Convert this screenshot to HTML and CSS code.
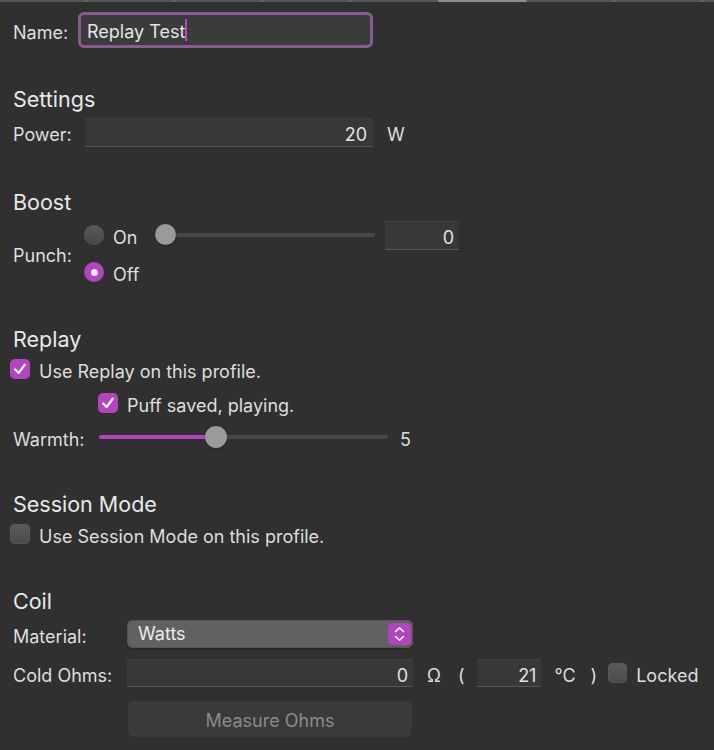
FILE: index.html
```html
<!DOCTYPE html>
<html>
<head>
<meta charset="utf-8">
<link rel="stylesheet" href="styles.css">
</head>
<body>
<div class="tabstrip">
  <span class="seg first"></span><span class="seg"></span><span class="seg"></span><span class="seg"></span><span class="seg"></span><span class="seg active"></span><span class="seg"></span><span class="seg"></span><span class="seg last"></span>
</div>
<div class="panel">
  <div class="row name-row">
    <span class="label w-name">Name:</span>
    <div class="focus-field"><span class="field-text">Replay Test</span><span class="caret"></span></div>
  </div>

  <h2 class="heading h-settings">Settings</h2>
  <div class="row power-row">
    <span class="label w-power">Power:</span>
    <div class="numfield power-field">20</div>
    <span class="unit">W</span>
  </div>

  <h2 class="heading">Boost</h2>
  <div class="punch">
    <span class="label w-punch">Punch:</span>
    <div class="punch-rows">
      <div class="row radio-row">
        <span class="radio-item"><span class="radio"></span><span class="rtext">On</span></span>
        <div class="slider punch-slider"><div class="track"></div><div class="thumb thumb-start"></div></div>
        <div class="numfield punch-field">0</div>
      </div>
      <div class="row radio-row off-row">
        <span class="radio-item"><span class="radio on"><span class="dot"></span></span><span class="rtext">Off</span></span>
      </div>
    </div>
  </div>

  <h2 class="heading">Replay</h2>
  <div class="row check-row first-check">
    <span class="check on"><svg viewBox="0 0 20 20" width="20" height="20"><path d="M5.2 10.4 L8.6 14 L14.8 5.6" fill="none" stroke="#fff" stroke-width="2.2" stroke-linecap="round" stroke-linejoin="round"/></svg></span>
    <span class="ctext">Use Replay on this profile.</span>
  </div>
  <div class="row check-row indent-check">
    <span class="check on"><svg viewBox="0 0 20 20" width="20" height="20"><path d="M5.2 10.4 L8.6 14 L14.8 5.6" fill="none" stroke="#fff" stroke-width="2.2" stroke-linecap="round" stroke-linejoin="round"/></svg></span>
    <span class="ctext">Puff saved, playing.</span>
  </div>
  <div class="row warmth-row">
    <span class="label w-warmth">Warmth:</span>
    <div class="slider warmth-slider"><div class="track"><div class="fill"></div></div><div class="thumb thumb-warmth"></div></div>
    <span class="value">5</span>
  </div>

  <h2 class="heading">Session Mode</h2>
  <div class="row check-row first-check">
    <span class="check"></span>
    <span class="ctext">Use Session Mode on this profile.</span>
  </div>

  <h2 class="heading">Coil</h2>
  <div class="row material-row">
    <span class="label w-coil">Material:</span>
    <div class="popup">
      <span class="popup-text">Watts</span>
      <span class="stepper"><svg viewBox="0 0 23 22" width="23" height="22"><path d="M7.5 8.5 L11.5 4.8 L15.5 8.5 M7.5 13.5 L11.5 17.2 L15.5 13.5" fill="none" stroke="#fff" stroke-width="1.6" stroke-linecap="round" stroke-linejoin="round"/></svg></span>
    </div>
  </div>
  <div class="row ohms-row">
    <span class="label w-coil">Cold Ohms:</span>
    <div class="numfield ohms-field">0</div>
    <span class="sym omega">Ω</span>
    <span class="sym paren-open">(</span>
    <div class="numfield temp-field">21</div>
    <span class="sym degc">°C</span>
    <span class="sym paren-close">)</span>
    <span class="check small"></span>
    <span class="ctext locked">Locked</span>
  </div>
  <div class="row button-row">
    <div class="button">Measure Ohms</div>
  </div>
</div>
</body>
</html>
```

FILE: styles.css
```css
html, body {
  margin: 0;
  padding: 0;
  background: #303030;
}
body {
  width: 714px;
  height: 750px;
  overflow: hidden;
  font-family: Inter, "Liberation Sans", Arial, sans-serif;
  font-size: 18px;
  color: #dedede;
}

.tabstrip {
  display: flex;
  height: 2px;
  background: #555;
}
.seg {
  width: 88px;
  height: 2px;
  border-right: 1px solid #7a7a7a;
  box-sizing: border-box;
}
.seg.first { width: 87px; }
.seg.active { background: #8c8c8c; }
.seg.last { border-right: none; flex: 1; }

.panel {
  padding-left: 13px;
}

.row {
  display: flex;
  align-items: center;
}
.label, .ctext, .rtext, .unit, .sym, .value {
  flex: none;
  line-height: 22px;
  padding-top: 5px;
}
.w-name { width: 65px; }
.w-power { width: 72px; }
.w-punch { width: 71px; }
.w-warmth { width: 86px; }
.w-coil { width: 114px; }

.heading {
  margin: 0;
  font-size: 21.5px;
  font-weight: 400;
  line-height: 26px;
  height: 26px;
  padding-top: 1px;
  box-sizing: border-box;
  color: #e8e8e8;
  margin-top: 41px;
}
.h-settings { margin-top: 37px; }

/* Name */
.name-row {
  margin-top: 10px;
  height: 36px;
}
.focus-field {
  width: 295px;
  height: 36px;
  box-sizing: border-box;
  border: 3px solid #8a5a92;
  border-radius: 6px;
  background: #3b3b3b;
  display: flex;
  align-items: center;
  padding-left: 6px;
  padding-top: 2px;
}
.field-text { color: #e4e4e4; }
.caret {
  display: inline-block;
  width: 2px;
  height: 22px;
  background: #b04cbd;
  margin-top: -2px;
}

/* numeric fields */
.numfield {
  box-sizing: border-box;
  background: #383838;
  border-top: 1px solid #3e3e3e;
  border-bottom: 1px solid #565656;
  text-align: right;
  padding-right: 5px;
  padding-top: 3px;
  line-height: 25px;
  height: 29px;
  color: #e2e2e2;
}
.power-row {
  margin-top: 7px;
  height: 29px;
}
.power-field { width: 288px; padding-right: 6px; }
.unit { margin-left: 14px; }

/* Punch */
.punch {
  display: flex;
  align-items: center;
  margin-top: 9px;
}
.punch-rows {
  display: flex;
  flex-direction: column;
  gap: 13px;
}
.radio-row { height: 24px; }
.radio-item {
  display: flex;
  align-items: center;
  width: 71px;
}
.radio {
  width: 20px;
  height: 20px;
  border-radius: 50%;
  background: linear-gradient(#5a5a5a, #474747);
  box-shadow: inset 0 0 0 0.5px #555;
  display: flex;
  align-items: center;
  justify-content: center;
  flex: none;
}
.radio.on {
  background: #b344bf;
  box-shadow: none;
}
.dot {
  width: 7px;
  height: 7px;
  border-radius: 50%;
  background: #f4e8f6;
}
.rtext { margin-left: 9px; }

.slider {
  position: relative;
  height: 22px;
  display: flex;
  align-items: center;
}
.track {
  width: 100%;
  height: 4px;
  border-radius: 2px;
  background: #474747;
  overflow: hidden;
}
.thumb {
  position: absolute;
  top: 0;
  width: 21px;
  height: 21px;
  border-radius: 50%;
  background: #9a9a9a;
  box-shadow: 0 0.5px 1.5px rgba(0,0,0,0.5);
}
.punch-slider { width: 220px; }
.thumb-start { left: 0; top: 0; }
.punch-field {
  width: 74px;
  margin-left: 10px;
}

/* checks */
.check-row { height: 24px; }
.first-check {
  margin-top: 6px;
  margin-left: -3px;
}
.indent-check {
  margin-top: 10px;
  margin-left: 85px;
}
.check {
  width: 20px;
  height: 20px;
  border-radius: 5px;
  background: linear-gradient(#5b5b5b, #4a4a4a);
  box-shadow: inset 0 0 0 0.5px #5e5e5e;
  flex: none;
  display: block;
}
.check svg { display: block; }
.check.on {
  background: #b344bf;
  box-shadow: none;
}
.ctext { margin-left: 9px; }

/* Warmth */
.warmth-row {
  margin-top: 10px;
  height: 24px;
}
.warmth-slider { width: 289px; }
.fill {
  width: 117px;
  height: 4px;
  background: #b344bf;
}
.thumb-warmth {
  left: 106px;
  width: 22px;
  height: 22px;
}
.value { margin-left: 12px; }

/* Coil */
.material-row {
  margin-top: 7px;
  height: 28px;
}
.popup {
  width: 286px;
  height: 28px;
  box-sizing: border-box;
  border-radius: 6px;
  background: #616161;
  box-shadow: inset 0 0 0 1px #555, 0 1px 1px rgba(0,0,0,0.25);
  display: flex;
  align-items: center;
  justify-content: space-between;
  padding-left: 11px;
  padding-right: 2px;
}
.popup-text {
  color: #ececec;
  margin-top: -1px;
}
.stepper {
  width: 23px;
  height: 22px;
  border-radius: 5px;
  background: #b344bf;
  display: block;
}
.stepper svg { display: block; }

.ohms-row {
  margin-top: 11px;
  height: 28px;
}
.ohms-field { width: 286px; height: 28px; line-height: 24px; padding-top: 4px; }
.omega { margin-left: 14px; }
.paren-open { margin-left: 17px; }
.temp-field {
  width: 64px;
  height: 28px;
  line-height: 24px;
  padding-top: 4px;
  margin-left: 13px;
}
.degc { margin-left: 13px; }
.paren-close { margin-left: 15px; }
.check.small {
  width: 19px;
  height: 20px;
  margin-left: 11px;
}
.locked { margin-left: 9px; }

.button-row {
  margin-top: 14px;
  padding-left: 115px;
}
.button {
  width: 284px;
  height: 36px;
  border-radius: 6px;
  background: #3a3a3a;
  color: #8a8a8a;
  text-align: center;
  padding-top: 4px;
  box-sizing: border-box;
  line-height: 32px;
}
```
